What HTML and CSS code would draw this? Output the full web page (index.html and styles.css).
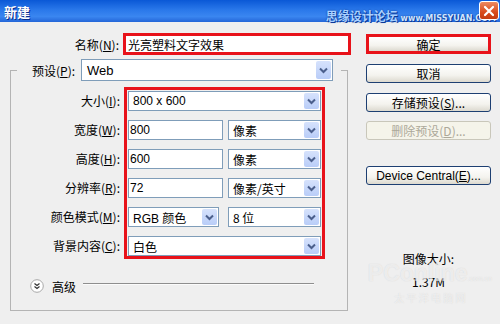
FILE: index.html
```html
<!DOCTYPE html>
<html lang="zh-CN">
<head>
  <meta charset="UTF-8">
  <title>新建</title>
  <link rel="stylesheet" href="styles.css">
</head>
<body>
  <div class="dialog">

    <div class="titlebar">
      <span class="title">新建</span>
      <span class="site">思缘设计论坛 <small>www.MISSYUAN.COM</small></span>
      <span class="close">
        <svg width="12" height="12" viewBox="0 0 12 12"><path d="M2 2L10 10M10 2L2 10" stroke="#fff" stroke-width="2.2" stroke-linecap="round"/></svg>
      </span>
    </div>

    <div class="main">
      <div class="left">
        <div class="name-row">
          <label class="lbl">名称(<u>N</u>):</label>
          <div class="field name">光亮塑料文字效果</div>
        </div>

        <fieldset class="group">
          <legend>
            <div class="preset-row">
              <label>预设(<u>P</u>):</label>
              <div class="sel preset">Web<span class="arrow"><svg width="15" height="18" viewBox="0 0 15 18"><path d="M4 7.5L7.5 11L11 7.5" fill="none" stroke="#4b5f8c" stroke-width="2"/></svg></span></div>
            </div>
          </legend>

          <div class="form">
            <div class="labels">
              <label>大小(<u>I</u>):</label>
              <label>宽度(<u>W</u>):</label>
              <label>高度(<u>H</u>):</label>
              <label>分辨率(<u>R</u>):</label>
              <label>颜色模式(<u>M</u>):</label>
              <label>背景内容(<u>C</u>):</label>
            </div>
            <div class="hl">
              <div class="row">
                <div class="sel full">800 x 600<span class="arrow"><svg width="15" height="18" viewBox="0 0 15 18"><path d="M4 7.5L7.5 11L11 7.5" fill="none" stroke="#4b5f8c" stroke-width="2"/></svg></span></div>
              </div>
              <div class="row">
                <div class="field num">800</div>
                <div class="sel unit">像素<span class="arrow"><svg width="15" height="18" viewBox="0 0 15 18"><path d="M4 7.5L7.5 11L11 7.5" fill="none" stroke="#4b5f8c" stroke-width="2"/></svg></span></div>
              </div>
              <div class="row">
                <div class="field num">600</div>
                <div class="sel unit">像素<span class="arrow"><svg width="15" height="18" viewBox="0 0 15 18"><path d="M4 7.5L7.5 11L11 7.5" fill="none" stroke="#4b5f8c" stroke-width="2"/></svg></span></div>
              </div>
              <div class="row">
                <div class="field num">72</div>
                <div class="sel unit">像素/英寸<span class="arrow"><svg width="15" height="18" viewBox="0 0 15 18"><path d="M4 7.5L7.5 11L11 7.5" fill="none" stroke="#4b5f8c" stroke-width="2"/></svg></span></div>
              </div>
              <div class="row">
                <div class="sel mode">RGB 颜色<span class="arrow"><svg width="15" height="18" viewBox="0 0 15 18"><path d="M4 7.5L7.5 11L11 7.5" fill="none" stroke="#4b5f8c" stroke-width="2"/></svg></span></div>
                <div class="sel unit">8 位<span class="arrow"><svg width="15" height="18" viewBox="0 0 15 18"><path d="M4 7.5L7.5 11L11 7.5" fill="none" stroke="#4b5f8c" stroke-width="2"/></svg></span></div>
              </div>
              <div class="row">
                <div class="sel full">白色<span class="arrow"><svg width="15" height="18" viewBox="0 0 15 18"><path d="M4 7.5L7.5 11L11 7.5" fill="none" stroke="#4b5f8c" stroke-width="2"/></svg></span></div>
              </div>
            </div>
          </div>

          <div class="advanced">
            <span class="circle">
              <svg width="14" height="14" viewBox="0 0 14 14"><circle cx="7" cy="7" r="6.3" fill="#fff" stroke="#a8a8a8"/><path d="M4.5 4.5L7 6.5L9.5 4.5M4.5 7.5L7 9.5L9.5 7.5" fill="none" stroke="#333" stroke-width="1.2"/></svg>
            </span>
            <span class="adv-text">高级</span>
            <span class="rule"></span>
          </div>
        </fieldset>
      </div>

      <div class="right">
        <button class="btn ok">确定</button>
        <button class="btn cancel">取消</button>
        <button class="btn save">存储预设(<u>S</u>)...</button>
        <button class="btn del" disabled>删除预设(<u>D</u>)...</button>
        <button class="btn device">Device Central(<u>E</u>)...</button>
        <div class="size">图像大小:<br>1.37M</div>
      </div>
    </div>

    <div class="pcmark">
      <div class="pc">PConline<small>.com.cn</small></div>
      <div class="pc-cn">太 平 洋 电 脑 网</div>
    </div>
  </div>
</body>
</html>
```

FILE: styles.css
```css
* {
  box-sizing: border-box;
}
body {
  margin: 0;
  background: #efefef;
  font-family: "Liberation Sans", "Noto Sans CJK SC", sans-serif;
  font-size: 12px;
  color: #000;
}
u {
  text-decoration: underline;
}
.dialog {
  position: relative;
  width: 500px;
  height: 324px;
  overflow: hidden;
  background: #efefef;
}

/* title bar */
.titlebar {
  height: 22px;
  display: flex;
  align-items: center;
  background: linear-gradient(#0a58d6, #2a78ea 45%, #3a86f0 75%, #2466d8);
  color: #fff;
  padding-left: 4px;
}
.title {
  font-family: "Noto Sans CJK SC", sans-serif;
  font-weight: bold;
  font-size: 13px;
  text-shadow: 1px 1px 0 #0a2c8c;
}
.site {
  margin-left: auto;
  margin-right: 4px;
  margin-top: 8px;
  font-family: "Noto Sans CJK SC", sans-serif;
  font-size: 12px;
  font-weight: bold;
  color: #a9d0ff;
  text-shadow: 0 0 2px #0b3a9a, 1px 1px 0 #0b3a9a;
  white-space: nowrap;
}
.site small {
  font-family: "DejaVu Sans", sans-serif;
  font-size: 8px;
  font-weight: bold;
  color: #cfe4ff;
}
.close {
  position: absolute;
  right: 1px;
  top: 1px;
  width: 20px;
  height: 19px;
  border: 1px solid #fff;
  border-radius: 3px;
  background: linear-gradient(#ec8a62, #d84a1c 60%, #c43c12);
  display: flex;
  align-items: center;
  justify-content: center;
}

/* main area */
.main {
  display: flex;
  padding: 11px 0 0 10px;
}
.left {
  width: 341px;
}
.name-row {
  display: flex;
  align-items: center;
  height: 22px;
}
.lbl,
.labels label {
  width: 110px;
  text-align: right;
  font-family: "Noto Sans CJK SC", sans-serif;
  padding-right: 1px;
}
.field {
  background: #fff;
  border: 1px solid #7f9db9;
  height: 20px;
  display: flex;
  align-items: center;
  white-space: nowrap;
}
.field.name {
  margin-left: 3px;
  width: 228px;
  height: 22px;
  border: 3px solid #e8121a;
  padding-left: 2px;
  font-family: "Noto Sans CJK SC", sans-serif;
}

/* group box */
.group {
  margin: 3px 0 0 0;
  padding: 0 0 16px 0;
  width: 338px;
  height: 253px;
  border: 1px solid #b4b4b4;
}
.group legend {
  margin-left: 6px;
  padding: 0 8px 0 15px;
}
.preset-row {
  display: flex;
  align-items: center;
  height: 24px;
  font-family: "Noto Sans CJK SC", sans-serif;
}
.preset-row label {
  width: 49px;
}
.sel {
  background: #fff;
  border: 1px solid #7f9db9;
  height: 20px;
  display: flex;
  align-items: center;
  padding-left: 4px;
  font-family: "Liberation Sans", "Noto Sans CJK SC", sans-serif;
  white-space: nowrap;
}
.sel.preset {
  width: 252px;
  height: 22px;
  padding-left: 5px;
  font-size: 13px;
}
.arrow {
  margin-left: auto;
  margin-right: 1px;
  width: 15px;
  height: calc(100% - 2px);
  border-radius: 2px;
  background: linear-gradient(#d6e2fc, #b9cdf8);
  display: flex;
  align-items: center;
  justify-content: center;
}

.form {
  display: flex;
  margin-top: 5px;
}
.labels {
  display: flex;
  flex-direction: column;
  gap: 9px;
  padding-top: 4px;
}
.labels label {
  height: 20px;
  line-height: 20px;
}
.hl {
  margin-left: 3px;
  width: 201px;
  border: 3px solid #e8121a;
  padding: 1px 1px 0 1px;
  display: flex;
  flex-direction: column;
  gap: 9px;
}
.row {
  display: flex;
  justify-content: space-between;
  height: 20px;
}
.sel.full {
  width: 100%;
}
.field.num {
  width: 95px;
  padding-left: 1px;
}
.sel.unit {
  width: 93px;
  font-family: "Noto Sans CJK SC", sans-serif;
}
.sel.mode {
  width: 91px;
}

.advanced {
  display: flex;
  align-items: center;
  width: 302px;
  margin-top: 20px;
  margin-left: 19px;
  height: 14px;
  font-family: "Noto Sans CJK SC", sans-serif;
}
.circle {
  display: flex;
  margin-right: 8px;
}
.rule {
  display: block;
  align-self: flex-start;
  width: 231px;
  height: 2px;
  margin-top: 4px;
  margin-left: 7px;
  border-top: 1px solid #8e8e8e;
  border-bottom: 1px solid #fbfbfb;
}

/* buttons */
.right {
  margin-left: 15px;
  width: 125px;
  display: flex;
  flex-direction: column;
}
.btn {
  height: 19px;
  padding: 0;
  border: 1px solid #1d3f72;
  border-radius: 3px;
  background: linear-gradient(#ffffff, #f4f3ee 60%, #dcd9cf);
  font-family: "Noto Sans CJK SC", sans-serif;
  font-size: 12px;
  color: #000;
  line-height: 16px;
}
.btn.ok {
  margin-top: 1px;
  height: 20px;
  border: 3px solid #e8121a;
  border-radius: 0;
}
.btn.cancel,
.btn.save {
  margin-top: 10px;
}
.btn.del {
  margin-top: 9px;
  border-color: #c9c7ba;
  background: #f5f4ea;
  color: #aca899;
}
.btn.device {
  margin-top: 26px;
  font-family: "Liberation Sans", sans-serif;
}
.size {
  margin-top: 62px;
  text-align: center;
  line-height: 23px;
  font-family: "Noto Sans CJK SC", sans-serif;
}

/* faint site watermark */
.pcmark {
  position: absolute;
  right: 8px;
  bottom: 20px;
  text-align: center;
  color: rgba(255, 255, 255, 0.6);
  text-shadow: 0 0 1px rgba(170, 170, 170, 0.45);
}
.pc {
  font-family: "Liberation Sans", sans-serif;
  font-size: 23px;
  font-weight: bold;
  line-height: 24px;
}
.pc small {
  font-size: 7px;
  font-weight: normal;
}
.pc-cn {
  font-family: "Noto Sans CJK SC", sans-serif;
  font-size: 10px;
  line-height: 13px;
}
```
